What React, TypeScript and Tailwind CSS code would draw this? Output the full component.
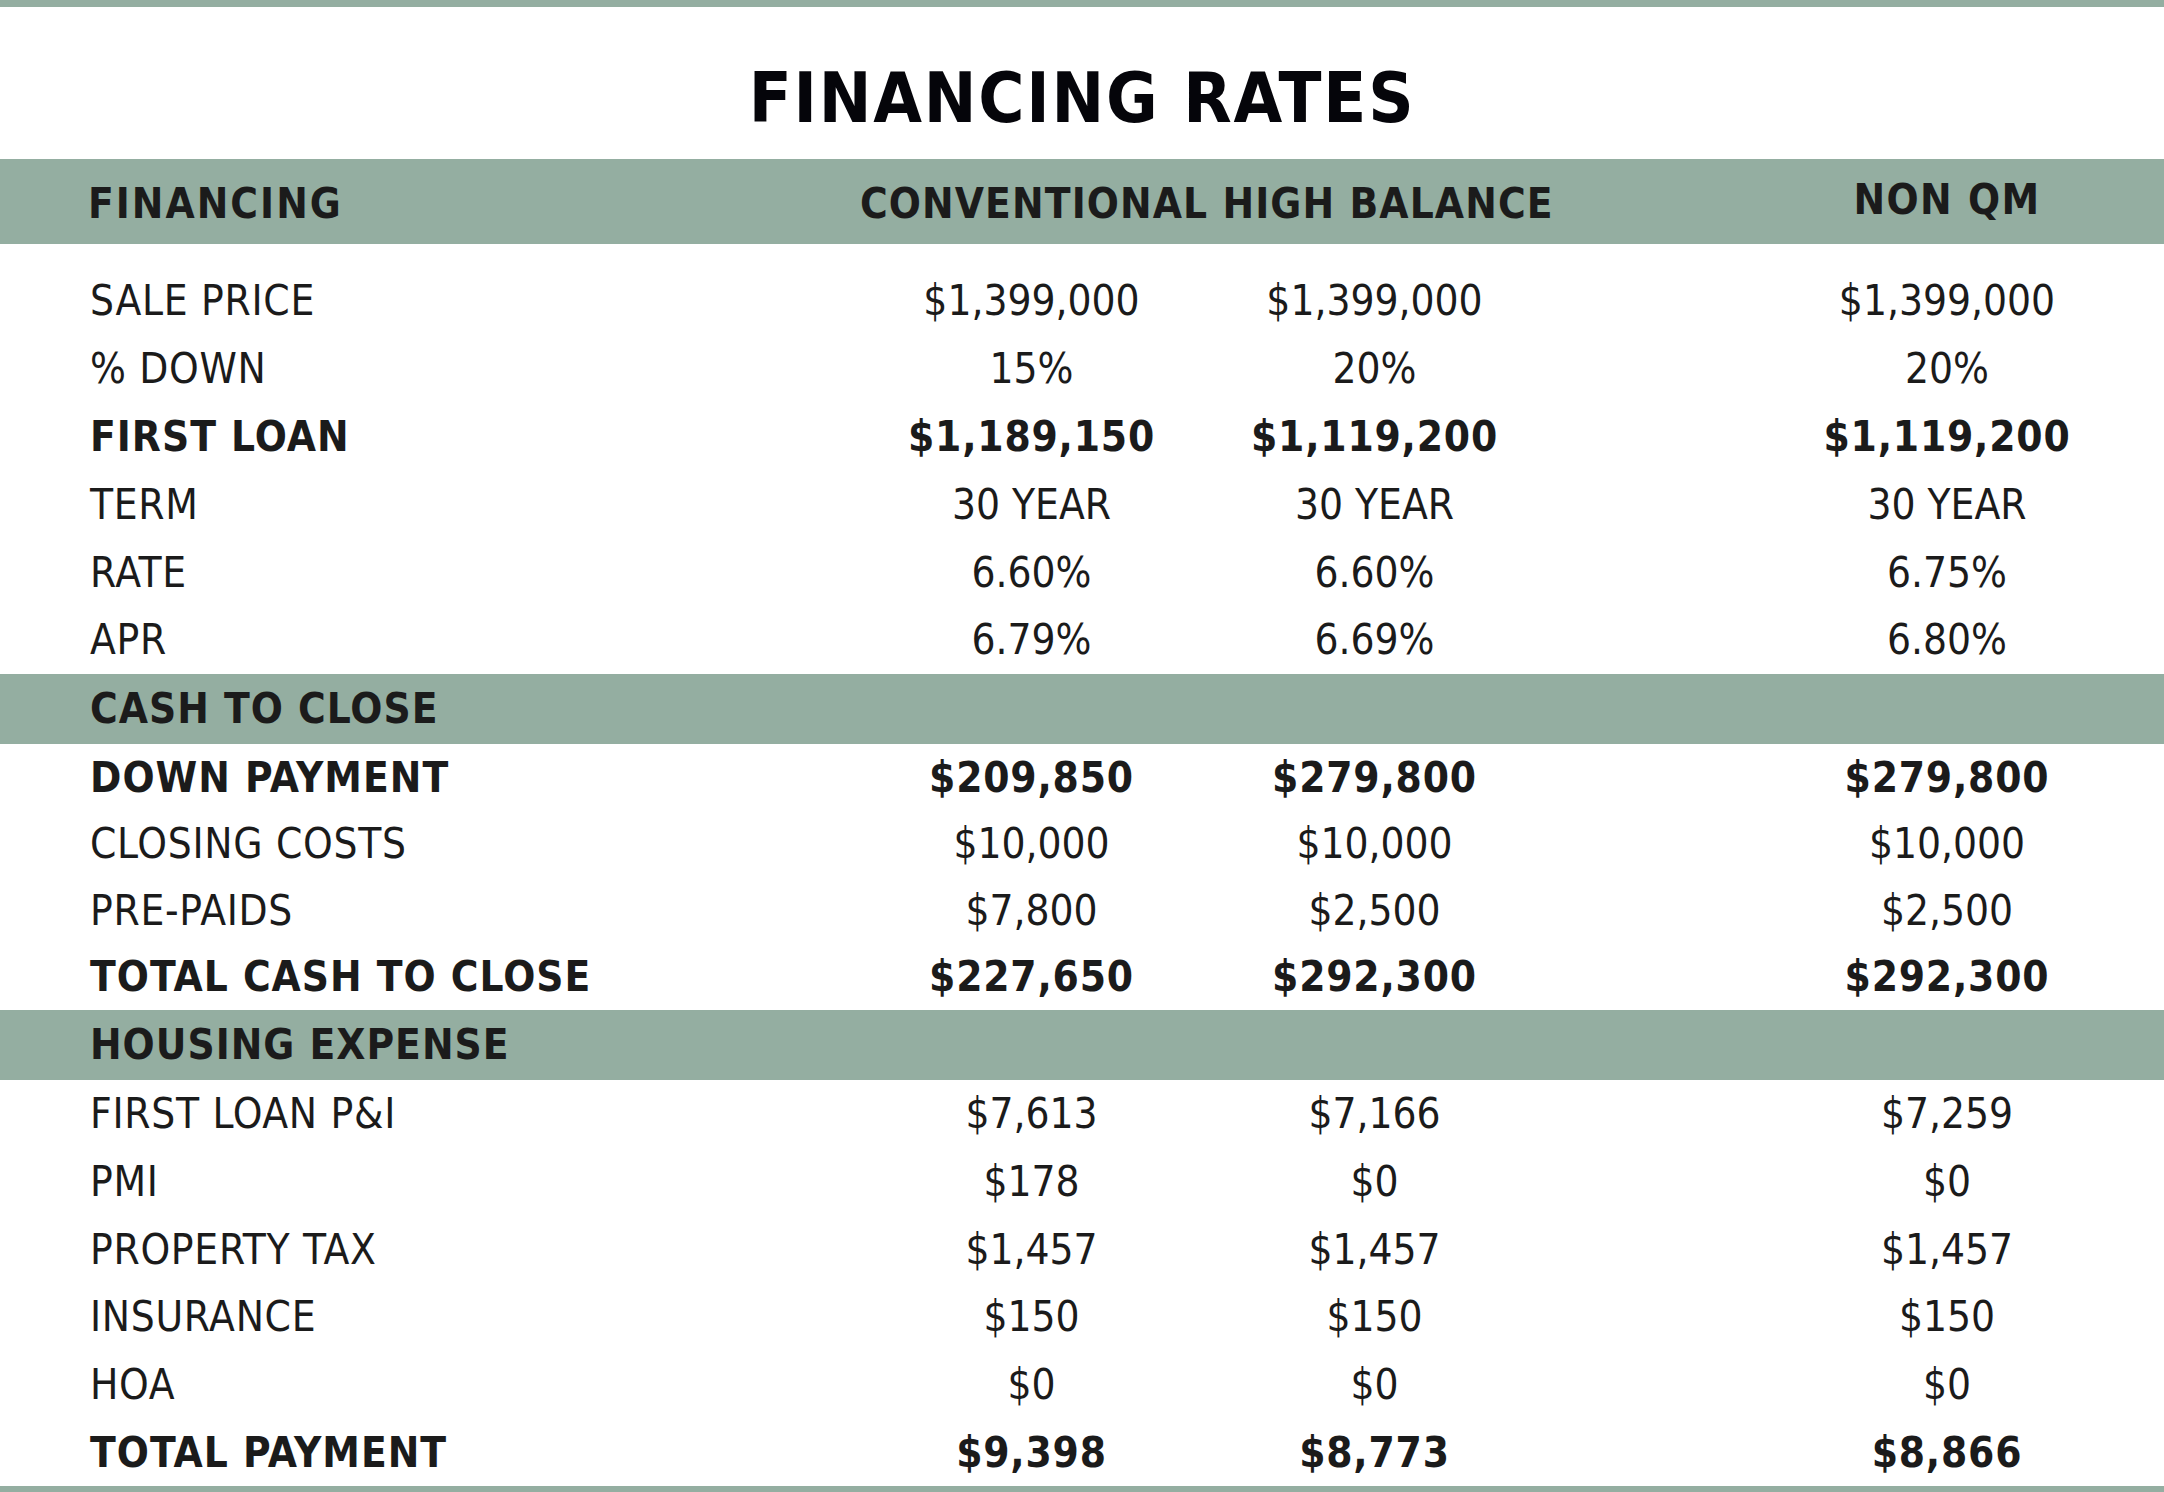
import React from "react";

type Row =
  | { kind: "band"; label: string }
  | { kind: "row"; label: string; v: [string, string, string]; bold?: boolean };

const rows: Row[] = [
  { kind: "row", label: "SALE PRICE", v: ["$1,399,000", "$1,399,000", "$1,399,000"] },
  { kind: "row", label: "% DOWN", v: ["15%", "20%", "20%"] },
  { kind: "row", label: "FIRST LOAN", v: ["$1,189,150", "$1,119,200", "$1,119,200"], bold: true },
  { kind: "row", label: "TERM", v: ["30 YEAR", "30 YEAR", "30 YEAR"] },
  { kind: "row", label: "RATE", v: ["6.60%", "6.60%", "6.75%"] },
  { kind: "row", label: "APR", v: ["6.79%", "6.69%", "6.80%"] },
  { kind: "band", label: "CASH TO CLOSE" },
  { kind: "row", label: "DOWN PAYMENT", v: ["$209,850", "$279,800", "$279,800"], bold: true },
  { kind: "row", label: "CLOSING COSTS", v: ["$10,000", "$10,000", "$10,000"] },
  { kind: "row", label: "PRE-PAIDS", v: ["$7,800", "$2,500", "$2,500"] },
  { kind: "row", label: "TOTAL CASH TO CLOSE", v: ["$227,650", "$292,300", "$292,300"], bold: true },
  { kind: "band", label: "HOUSING EXPENSE" },
  { kind: "row", label: "FIRST LOAN P&I", v: ["$7,613", "$7,166", "$7,259"] },
  { kind: "row", label: "PMI", v: ["$178", "$0", "$0"] },
  { kind: "row", label: "PROPERTY TAX", v: ["$1,457", "$1,457", "$1,457"] },
  { kind: "row", label: "INSURANCE", v: ["$150", "$150", "$150"] },
  { kind: "row", label: "HOA", v: ["$0", "$0", "$0"] },
  { kind: "row", label: "TOTAL PAYMENT", v: ["$9,398", "$8,773", "$8,866"], bold: true },
];

const grid = "grid grid-cols-[860px_343px_343px_184px_434px]";

function DataRow({ r, h }: { r: Extract<Row, { kind: "row" }>; h: string }) {
  return (
    <div className={`${grid} ${h} items-center text-[42px] leading-none whitespace-nowrap pt-[1px] ${r.bold ? "font-bold" : ""}`}>
      <div className={`pl-[90px] ${r.bold ? "tracking-[1px]" : "tracking-[0.7px]"}`}>{r.label}</div>
      <div className={`text-center ${r.bold ? "tracking-[0.8px]" : ""}`}>{r.v[0]}</div>
      <div className={`text-center ${r.bold ? "tracking-[0.8px]" : ""}`}>{r.v[1]}</div>
      <div />
      <div className={`text-center ${r.bold ? "tracking-[0.8px]" : ""}`}>{r.v[2]}</div>
    </div>
  );
}

function Band({ label }: { label: string }) {
  return (
    <div className="h-[70px] bg-[#94aea1] flex items-center pl-[90px] pt-[1px] text-[42px] font-bold leading-none tracking-[1px] whitespace-nowrap">
      {label}
    </div>
  );
}

export default function App() {
  const heights = (i: number) => (i < 6 ? "h-[67.8px]" : i < 11 ? "h-[66.5px]" : "h-[67.7px]");
  return (
    <div className="w-[2164px] h-[1492px] bg-white flex flex-col text-[#1b1b1b] font-['DejaVu_Sans_Condensed','DejaVu_Sans',sans-serif] font-stretch-condensed">
      <div className="h-[7px] bg-[#94aea1]" />
      <div className="h-[152px] flex items-center justify-center pt-[29px]">
        <h1 className="text-[70px] leading-none font-bold text-[#05050a] tracking-[1.8px] whitespace-nowrap">FINANCING RATES</h1>
      </div>
      <div className={`${grid} h-[85px] bg-[#94aea1] items-center pt-[5px] text-[42px] font-bold leading-none whitespace-nowrap`}>
        <div className="pl-[88px] tracking-[2px]">FINANCING</div>
        <div className="col-span-2 text-center tracking-[1.1px]">CONVENTIONAL HIGH BALANCE</div>
        <div />
        <div className="text-center pb-[9px] tracking-[1.5px]">NON QM</div>
      </div>
      <div className="h-[23px]" />
      {rows.map((r, i) =>
        r.kind === "band" ? <Band key={i} label={r.label} /> : <DataRow key={i} r={r} h={heights(i)} />
      )}
      <div className="h-[6px] bg-[#94aea1]" />
    </div>
  );
}
